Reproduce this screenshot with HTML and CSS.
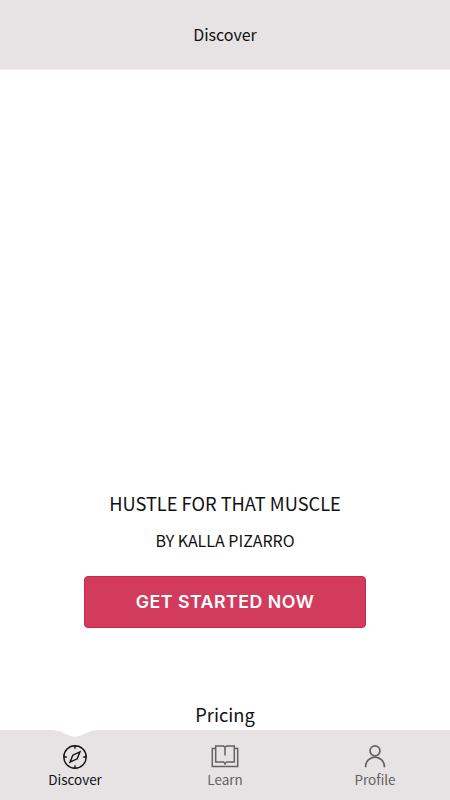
FILE: index.html
```html
<!DOCTYPE html>
<html lang="en">

<head>
    <meta charset="UTF-8">
    <meta name="viewport" content="width=device-width, initial-scale=1.0">
    <title>Discover</title>
    <link rel="stylesheet" href="styles.css">
</head>

<body>
    <header class="top-bar">
        <h1>Discover</h1>
    </header>

    <main class="content">
        <!-- Cover -->
        <section class="cover">
            <h2 class="cover-title">HUSTLE FOR THAT MUSCLE</h2>
            <p class="cover-author">BY KALLA PIZARRO</p>
            <button class="start-button">GET STARTED NOW</button>
        </section>

        <h3 class="section-title">Pricing</h3>
    </main>

    <!-- Bottom Navigation -->
    <nav class="tab-bar">
        <a class="tab active" href="#">
            <svg class="notch" width="50" height="8" viewBox="0 0 50 8">
                <path d="M0 0C13 0 18 6.8 25 6.8S37 0 50 0Z" fill="#fff"/>
            </svg>
            <svg class="icon" width="26" height="26" viewBox="0 0 26 26" fill="none" stroke="currentColor" stroke-width="1.4">
                <circle cx="13" cy="13" r="11.2"/>
                <path d="M13 1.8v3M13 21.2v3M1.8 13h3M21.2 13h3"/>
                <path d="M18 7.8L15.2 14.8 8 18.2 10.8 11.2Z"/>
            </svg>
            <span>Discover</span>
        </a>
        <a class="tab" href="#">
            <svg class="icon" width="28" height="26" viewBox="0 0 28 26" fill="none" stroke="currentColor" stroke-width="1.5">
                <path d="M5 4.5H1.3V22.6H26.7V4.5H23"/>
                <path d="M14 3.5L12.5 2H4.7V18H12.5L14 19.5 15.5 18H23.3V2H15.5Z"/>
                <path d="M14 3.5V11.5M14 19.5V20.8"/>
            </svg>
            <span>Learn</span>
        </a>
        <a class="tab" href="#">
            <svg class="icon" width="26" height="26" viewBox="0 0 26 26" fill="none" stroke="currentColor" stroke-width="1.7">
                <circle cx="13" cy="6.8" r="5"/>
                <path d="M3.6 23.2V22.5A9.4 9.4 0 0 1 22.4 22.5V23.2"/>
            </svg>
            <span>Profile</span>
        </a>
    </nav>
</body>

</html>
```

FILE: styles.css
```css
* {
    box-sizing: border-box;
}

body {
    display: flex;
    flex-direction: column;
    height: 100vh;
    margin: 0;
    overflow: hidden;
    background-color: #fff;
    color: #111;
    font-family: "Noto Sans CJK JP", sans-serif;
    text-align: center;
}

h1,
h2,
h3,
p {
    margin: 0;
    font-weight: normal;
}

.top-bar {
    display: flex;
    align-items: center;
    justify-content: center;
    height: 70px;
    padding-bottom: 2px;
    background-color: #e7e3e4;
    border-bottom: 1px solid #f0eeef;
}

.top-bar h1 {
    font-size: 16px;
}

.content {
    flex: 1;
    min-height: 0;
}

.cover {
    display: flex;
    flex-direction: column;
    align-items: center;
    padding-top: 419px;
}

.cover-title {
    font-size: 18.25px;
    line-height: 28px;
}

.cover-author {
    margin-top: 10px;
    font-size: 16px;
    line-height: 26px;
}

.start-button {
    width: 282px;
    height: 52px;
    margin-top: 23px;
    padding: 0 0 1px;
    background-color: #d23b5b;
    color: #fff;
    border: 1px solid #cf2650;
    border-radius: 4px;
    font-family: Inter, sans-serif;
    font-size: 17.75px;
    font-weight: 600;
    letter-spacing: 0.5px;
}

.section-title {
    margin-top: 72px;
    font-size: 18.25px;
    line-height: 28px;
}

.tab-bar {
    display: flex;
    flex-shrink: 0;
    height: 70px;
    background-color: #e7e3e4;
    position: relative;
}

.tab {
    display: flex;
    flex: 1;
    flex-direction: column;
    align-items: center;
    padding-top: 14px;
    color: #626262;
    font-size: 13.5px;
    line-height: 20px;
    text-decoration: none;
    position: relative;
}

.tab.active {
    color: #111;
}

.tab span {
    margin-top: -1px;
}

/* dip above the selected tab */
.notch {
    position: absolute;
    top: 0;
    left: 50%;
    transform: translateX(-50%);
}
```
